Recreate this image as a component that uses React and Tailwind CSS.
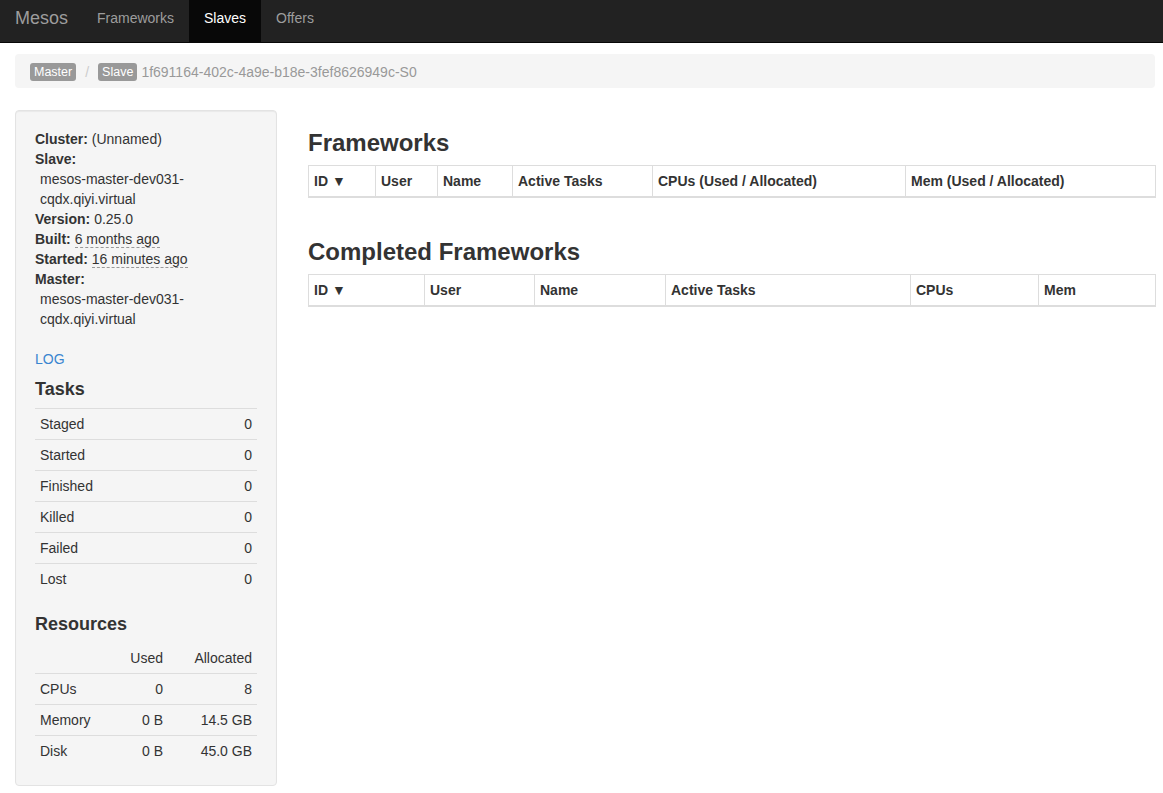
import React from "react";

const font = { fontFamily: '"Liberation Sans", Arial, Helvetica, sans-serif' };

function Label({ children }) {
  return (
    <span className="inline-flex items-center h-[18px] px-[4px] rounded-[3px] bg-[#999] text-white text-[12.5px] leading-[18px]">
      {children}
    </span>
  );
}

function Field({ label, children }) {
  return (
    <div className="leading-[20px]">
      <span className="font-bold">{label}</span> {children}
    </div>
  );
}

const fwCols = [
  ["ID ▼", "w-[67px]"],
  ["User", "w-[62px]"],
  ["Name", "w-[75px]"],
  ["Active Tasks", "w-[140px]"],
  ["CPUs (Used / Allocated)", "w-[253px]"],
  ["Mem (Used / Allocated)", "w-[250px]"],
];

const cfwCols = [
  ["ID ▼", "w-[116px]"],
  ["User", "w-[110px]"],
  ["Name", "w-[131px]"],
  ["Active Tasks", "w-[245px]"],
  ["CPUs", "w-[128px]"],
  ["Mem", "w-[117px]"],
];

function HeaderTable({ cols }) {
  return (
    <table className="w-full table-fixed border-collapse border border-[#ddd]">
      <thead>
        <tr>
          {cols.map(([t, w]) => (
            <th
              key={t}
              className={`${w} text-left font-bold px-[5px] py-[5px] leading-[20px] border border-[#ddd] border-b-2`}
            >
              {t}
            </th>
          ))}
        </tr>
      </thead>
    </table>
  );
}

export default function App() {
  const tasks = ["Staged", "Started", "Finished", "Killed", "Failed", "Lost"];
  const res = [
    ["CPUs", "0", "8"],
    ["Memory", "0 B", "14.5 GB"],
    ["Disk", "0 B", "45.0 GB"],
  ];
  return (
    <div style={font} className="min-h-[793px] bg-white text-[#333] text-[14px] leading-[20px]">
      <nav className="flex h-[43px] bg-[#222] border-b border-[#080808]">
        <div className="pl-[15px] pr-[14px] pt-[7px] text-[18px] leading-[22px] text-[#9d9d9d]">Mesos</div>
        <div className="px-[15px] pt-[8px] text-[#9d9d9d]">Frameworks</div>
        <div className="px-[15px] pt-[8px] bg-[#080808] text-white">Slaves</div>
        <div className="px-[15px] pt-[8px] text-[#9d9d9d]">Offers</div>
      </nav>

      <div className="pl-[15px] pr-[8px]">
        <div className="mt-[11px] h-[34px] rounded-[4px] bg-[#f5f5f5] px-[15px] pt-[1px] flex items-center">
          <Label>Master</Label>
          <span className="mx-[9px] text-[#ccc]">/</span>
          <Label>Slave</Label>
          <span className="ml-[4px] text-[#999]">1f691164-402c-4a9e-b18e-3fef8626949c-S0</span>
        </div>

        <div className="mt-[22px] flex gap-[31px] items-start">
          <div className="w-[262px] shrink-0 rounded-[4px] border border-[#e3e3e3] bg-[#f5f5f5] px-[19px] pt-[18px] pb-[19px] shadow-[inset_0_1px_1px_rgba(0,0,0,0.05)]">
            <Field label="Cluster:">(Unnamed)</Field>
            <Field label="Slave:" />
            <div className="ml-[5px]">mesos-master-dev031-cqdx.qiyi.virtual</div>
            <Field label="Version:">0.25.0</Field>
            <Field label="Built:">
              <span className="border-b border-dashed border-[#999]">6 months ago</span>
            </Field>
            <Field label="Started:">
              <span className="border-b border-dashed border-[#999]">16 minutes ago</span>
            </Field>
            <Field label="Master:" />
            <div className="ml-[5px]">mesos-master-dev031-cqdx.qiyi.virtual</div>

            <div className="mt-[20px] text-[#3a85d0]">LOG</div>

            <h4 className="mt-[10px] mb-[9px] text-[18px] leading-[20px] font-bold">Tasks</h4>
            <table className="w-full border-collapse">
              <tbody>
                {tasks.map((t) => (
                  <tr key={t} className="border-t border-[#ddd]">
                    <td className="px-[5px] py-[5px]">{t}</td>
                    <td className="px-[5px] py-[5px] text-right">0</td>
                  </tr>
                ))}
              </tbody>
            </table>

            <h4 className="mt-[21px] mb-[9px] text-[18px] leading-[19px] font-bold">Resources</h4>
            <table className="w-full table-fixed border-collapse">
              <thead>
                <tr className="border-b border-[#ddd]">
                  <th className="w-[75px] px-[5px] py-[5px]"></th>
                  <th className="w-[58px] px-[5px] py-[5px] text-right font-normal">Used</th>
                  <th className="w-[89px] px-[5px] py-[5px] text-right font-normal">Allocated</th>
                </tr>
              </thead>
              <tbody>
                {res.map(([a, b, c], i) => (
                  <tr key={a} className={i === 0 ? "" : "border-t border-[#ddd]"}>
                    <td className="px-[5px] py-[5px]">{a}</td>
                    <td className="px-[5px] py-[5px] text-right">{b}</td>
                    <td className="px-[5px] py-[5px] text-right">{c}</td>
                  </tr>
                ))}
              </tbody>
            </table>
          </div>

          <div className="flex-1 min-w-0">
            <h3 className="mt-[20px] mb-[9px] text-[24px] leading-[26px] font-bold">Frameworks</h3>
            <HeaderTable cols={fwCols} />
            <h3 className="mt-[41px] mb-[9px] text-[24px] leading-[26px] font-bold">Completed Frameworks</h3>
            <HeaderTable cols={cfwCols} />
          </div>
        </div>
      </div>
    </div>
  );
}
